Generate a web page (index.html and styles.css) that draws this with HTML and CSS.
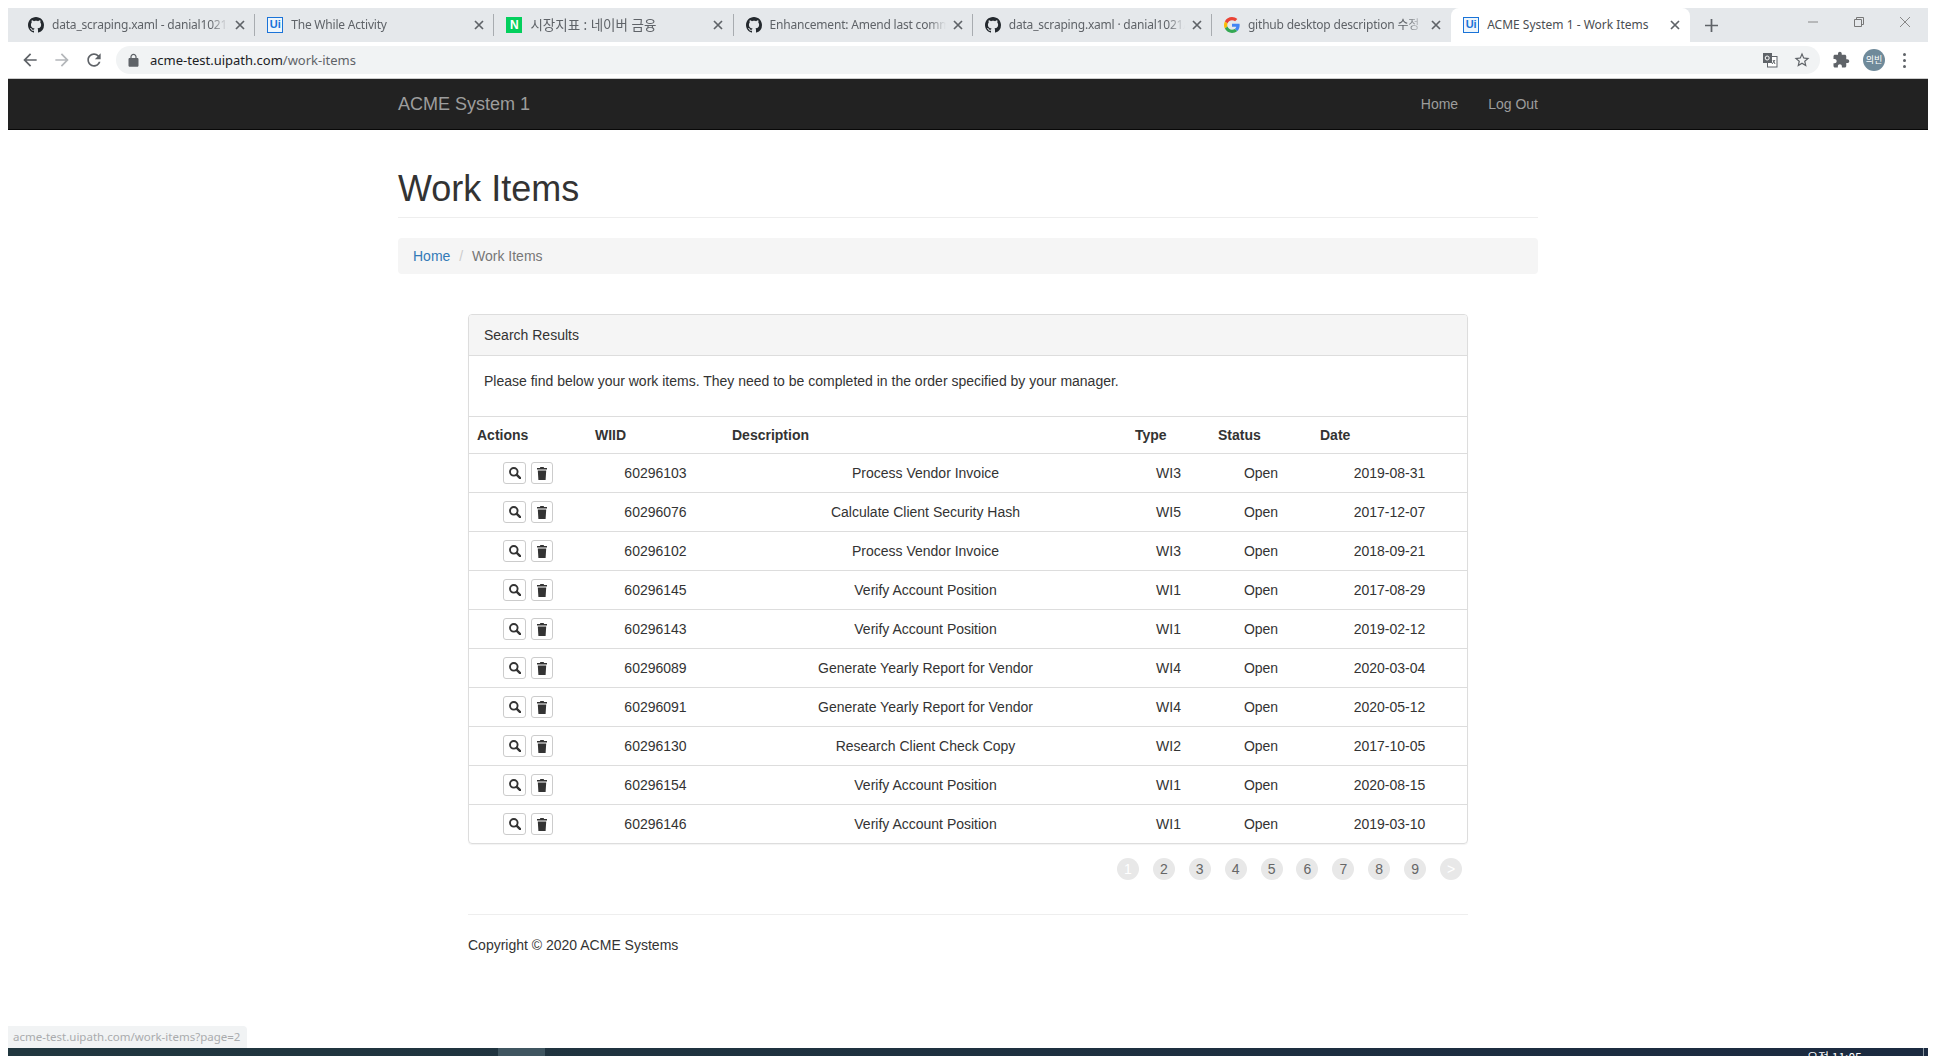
FILE: index.html
```html
<!DOCTYPE html>
<html>
  <head>
    <title>ACME System 1 - Work Items</title>
    <link rel="stylesheet" href="styles.css">
  </head>
  <body>
    <svg class="sprites" width="0" height="0">
      <symbol id="gh" viewBox="0 0 16 16"><path d="M8 0C3.58 0 0 3.58 0 8c0 3.54 2.29 6.53 5.47 7.59.4.07.55-.17.55-.38 0-.19-.01-.82-.01-1.49-2.01.37-2.53-.49-2.69-.94-.09-.23-.48-.94-.82-1.13-.28-.15-.68-.52-.01-.53.63-.01 1.08.58 1.23.82.72 1.21 1.87.87 2.33.66.07-.52.28-.87.51-1.07-1.78-.2-3.64-.89-3.64-3.95 0-.87.31-1.59.82-2.15-.08-.2-.36-1.02.08-2.12 0 0 .67-.21 2.2.82.64-.18 1.32-.27 2-.27.68 0 1.36.09 2 .27 1.53-1.04 2.2-.82 2.2-.82.44 1.1.16 1.92.08 2.12.51.56.82 1.27.82 2.15 0 3.07-1.87 3.75-3.65 3.95.29.25.54.73.54 1.48 0 1.07-.01 1.93-.01 2.2 0 .21.15.46.55.38A8.013 8.013 0 0016 8c0-4.42-3.58-8-8-8z"/></symbol>
      <symbol id="close" viewBox="0 0 10 10"><path d="M1 1l8 8M9 1l-8 8" stroke="#5f6368" stroke-width="1.700" fill="none"/></symbol>
      <symbol id="search" viewBox="0 0 12 12"><circle cx="4.800" cy="4.800" r="3.800" fill="none" stroke="#333" stroke-width="1.900"/><path d="M7.800 7.800l3.300 3.300" stroke="#333" stroke-width="2.400" stroke-linecap="round"/></symbol>
      <symbol id="trash" viewBox="0 0 10 13"><path d="M3.400 0h3.200l.5 1H10v1.500H0V1h2.900zM.8 3.400h8.400l-.6 9.600H1.400z" fill="#333"/></symbol>
    </svg>

    <div class="tabstrip">
      <div class="tab">
        <svg class="favicon"><use href="#gh"/></svg>
        <span class="tab-title">data_scraping.xaml - danial1021/UiPath</span>
        <svg class="tab-close"><use href="#close"/></svg>
      </div>
      <div class="tab">
        <span class="ui-icon">Ui</span>
        <span class="tab-title">The While Activity</span>
        <svg class="tab-close"><use href="#close"/></svg>
      </div>
      <div class="tab">
        <span class="naver-icon">N</span>
        <span class="tab-title tab-title-ko">시장지표 : 네이버 금융</span>
        <svg class="tab-close"><use href="#close"/></svg>
      </div>
      <div class="tab">
        <svg class="favicon"><use href="#gh"/></svg>
        <span class="tab-title">Enhancement: Amend last commit</span>
        <svg class="tab-close"><use href="#close"/></svg>
      </div>
      <div class="tab">
        <svg class="favicon"><use href="#gh"/></svg>
        <span class="tab-title">data_scraping.xaml · danial1021/UiPath</span>
        <svg class="tab-close"><use href="#close"/></svg>
      </div>
      <div class="tab tab-before-active">
        <svg class="favicon" viewBox="0 0 48 48">
          <path fill="#EA4335" d="M24 9.500c3.540 0 6.710 1.220 9.210 3.600l6.850-6.850C35.900 2.380 30.470 0 24 0 14.620 0 6.510 5.380 2.560 13.220l7.980 6.190C12.430 13.720 17.740 9.500 24 9.500z"/>
          <path fill="#4285F4" d="M46.980 24.550c0-1.570-.15-3.090-.38-4.550H24v9.020h12.940c-.58 2.960-2.260 5.480-4.780 7.180l7.730 6c4.510-4.180 7.090-10.360 7.090-17.650z"/>
          <path fill="#FBBC05" d="M10.530 28.590c-.48-1.450-.76-2.990-.76-4.590s.27-3.140.76-4.590l-7.980-6.190C.92 16.460 0 20.120 0 24c0 3.880.92 7.540 2.560 10.780l7.970-6.190z"/>
          <path fill="#34A853" d="M24 48c6.480 0 11.930-2.130 15.890-5.810l-7.730-6c-2.150 1.450-4.920 2.300-8.160 2.300-6.260 0-11.570-4.220-13.470-9.910l-7.980 6.190C6.510 42.620 14.620 48 24 48z"/>
        </svg>
        <span class="tab-title">github desktop description 수정</span>
        <svg class="tab-close"><use href="#close"/></svg>
      </div>
      <div class="tab tab-active">
        <span class="ui-icon">Ui</span>
        <span class="tab-title tab-title-full">ACME System 1 - Work Items</span>
        <svg class="tab-close"><use href="#close"/></svg>
      </div>
      <svg class="new-tab" viewBox="0 0 12 12"><path d="M6 0v12M0 6h12" stroke="#5f6368" stroke-width="1.600"/></svg>
      <div class="window-controls">
        <svg viewBox="0 0 12 12"><path d="M1 6h10" stroke="#888" stroke-width="1"/></svg>
        <svg viewBox="0 0 12 12"><path d="M1.500 3.500h7v7h-7zM3.500 3.500v-2h7v7h-2" stroke="#777" stroke-width="1" fill="none"/></svg>
        <svg viewBox="0 0 12 12"><path d="M1 1l10 10M11 1L1 11" stroke="#888" stroke-width="1"/></svg>
      </div>
    </div>

    <div class="toolbar">
      <svg class="tool-icon" viewBox="0 0 24 24"><path fill="#5f6368" d="M20 11H7.830l5.590-5.590L12 4l-8 8 8 8 1.410-1.410L7.830 13H20v-2z"/></svg>
      <svg class="tool-icon" viewBox="0 0 24 24"><path fill="#b4b7ba" d="M4 11h12.170l-5.590-5.590L12 4l8 8-8 8-1.410-1.410L16.170 13H4v-2z"/></svg>
      <svg class="tool-icon" viewBox="0 0 24 24"><path fill="#5f6368" d="M17.650 6.350C16.200 4.900 14.210 4 12 4c-4.420 0-7.990 3.580-7.990 8s3.570 8 7.990 8c3.730 0 6.840-2.550 7.730-6h-2.080c-.82 2.330-3.040 4-5.650 4-3.310 0-6-2.690-6-6s2.690-6 6-6c1.660 0 3.140.69 4.220 1.780L13 11h7V4l-2.350 2.350z"/></svg>
      <div class="omnibox">
        <svg class="lock" viewBox="0 0 24 24"><path fill="#5f6368" d="M18 8h-1V6c0-2.760-2.240-5-5-5S7 3.240 7 6v2H6c-1.100 0-2 .9-2 2v10c0 1.100.9 2 2 2h12c1.100 0 2-.9 2-2V10c0-1.100-.9-2-2-2zM9 6c0-1.660 1.340-3 3-3s3 1.340 3 3v2H9V6z"/></svg>
        <span class="url">acme-test.uipath.com<span class="url-path">/work-items</span></span>
        <svg class="translate" viewBox="0 0 16 16">
          <rect x="5.500" y="4.500" width="9.500" height="10.500" fill="#fff" stroke="#5f6368"/>
          <rect x="1" y="1" width="9" height="10" fill="#5f6368"/>
          <circle cx="5.200" cy="6" r="2" fill="none" stroke="#fff"/>
          <path d="M11 8l2 4M13 8l-3 4" stroke="#5f6368"/>
        </svg>
        <svg class="star" viewBox="0 0 24 24"><path fill="#5f6368" d="M22 9.240l-7.190-.62L12 2 9.190 8.630 2 9.240l5.460 4.730L5.820 21 12 17.270 18.180 21l-1.630-7.030L22 9.240zM12 15.400l-3.760 2.270 1-4.280-3.320-2.880 4.380-.38L12 6.100l1.710 4.040 4.380.38-3.320 2.880 1 4.280L12 15.400z"/></svg>
      </div>
      <svg class="puzzle" viewBox="0 0 24 24"><path fill="#5f6368" d="M20.500 11H19V7c0-1.100-.9-2-2-2h-4V3.500C13 2.120 11.880 1 10.500 1S8 2.120 8 3.500V5H4c-1.100 0-1.990.9-1.990 2v3.800H3.500c1.490 0 2.700 1.210 2.700 2.700s-1.210 2.700-2.700 2.700H2V20c0 1.100.9 2 2 2h3.800v-1.500c0-1.490 1.210-2.700 2.700-2.700 1.490 0 2.700 1.210 2.700 2.700V22H17c1.100 0 2-.9 2-2v-4h1.500c1.380 0 2.500-1.120 2.500-2.500S21.880 11 20.500 11z"/></svg>
      <span class="avatar">의빈</span>
      <span class="dots"><i></i><i></i><i></i></span>
    </div>

    <nav class="navbar">
      <div class="container navbar-inner">
        <a class="brand">ACME System 1</a>
        <div class="nav-links">
          <a>Home</a>
          <a>Log Out</a>
        </div>
      </div>
    </nav>

    <main class="page">
      <div class="container">
        <div class="page-header">
          <h1>Work Items</h1>
        </div>
        <div class="breadcrumb">
          <a>Home</a>
          <span class="crumb-sep">/</span>
          <span class="crumb-active">Work Items</span>
        </div>

        <div class="content">
          <div class="panel">
            <div class="panel-heading">Search Results</div>
            <div class="panel-body">
              <p>Please find below your work items. They need to be completed in the order specified by your manager.</p>
            </div>
            <table class="items">
              <colgroup>
                <col class="col-actions"><col class="col-wiid"><col class="col-desc"><col class="col-type"><col class="col-status"><col class="col-date">
              </colgroup>
              <thead>
                <tr><th>Actions</th><th>WIID</th><th>Description</th><th>Type</th><th>Status</th><th>Date</th></tr>
              </thead>
              <tbody>
                <tr>
                  <td><div class="actions"><a class="btn btn-search"><svg><use href="#search"/></svg></a><a class="btn"><svg class="trash"><use href="#trash"/></svg></a></div></td>
                  <td>60296103</td><td>Process Vendor Invoice</td><td>WI3</td><td>Open</td><td>2019-08-31</td>
                </tr>
                <tr>
                  <td><div class="actions"><a class="btn btn-search"><svg><use href="#search"/></svg></a><a class="btn"><svg class="trash"><use href="#trash"/></svg></a></div></td>
                  <td>60296076</td><td>Calculate Client Security Hash</td><td>WI5</td><td>Open</td><td>2017-12-07</td>
                </tr>
                <tr>
                  <td><div class="actions"><a class="btn btn-search"><svg><use href="#search"/></svg></a><a class="btn"><svg class="trash"><use href="#trash"/></svg></a></div></td>
                  <td>60296102</td><td>Process Vendor Invoice</td><td>WI3</td><td>Open</td><td>2018-09-21</td>
                </tr>
                <tr>
                  <td><div class="actions"><a class="btn btn-search"><svg><use href="#search"/></svg></a><a class="btn"><svg class="trash"><use href="#trash"/></svg></a></div></td>
                  <td>60296145</td><td>Verify Account Position</td><td>WI1</td><td>Open</td><td>2017-08-29</td>
                </tr>
                <tr>
                  <td><div class="actions"><a class="btn btn-search"><svg><use href="#search"/></svg></a><a class="btn"><svg class="trash"><use href="#trash"/></svg></a></div></td>
                  <td>60296143</td><td>Verify Account Position</td><td>WI1</td><td>Open</td><td>2019-02-12</td>
                </tr>
                <tr>
                  <td><div class="actions"><a class="btn btn-search"><svg><use href="#search"/></svg></a><a class="btn"><svg class="trash"><use href="#trash"/></svg></a></div></td>
                  <td>60296089</td><td>Generate Yearly Report for Vendor</td><td>WI4</td><td>Open</td><td>2020-03-04</td>
                </tr>
                <tr>
                  <td><div class="actions"><a class="btn btn-search"><svg><use href="#search"/></svg></a><a class="btn"><svg class="trash"><use href="#trash"/></svg></a></div></td>
                  <td>60296091</td><td>Generate Yearly Report for Vendor</td><td>WI4</td><td>Open</td><td>2020-05-12</td>
                </tr>
                <tr>
                  <td><div class="actions"><a class="btn btn-search"><svg><use href="#search"/></svg></a><a class="btn"><svg class="trash"><use href="#trash"/></svg></a></div></td>
                  <td>60296130</td><td>Research Client Check Copy</td><td>WI2</td><td>Open</td><td>2017-10-05</td>
                </tr>
                <tr>
                  <td><div class="actions"><a class="btn btn-search"><svg><use href="#search"/></svg></a><a class="btn"><svg class="trash"><use href="#trash"/></svg></a></div></td>
                  <td>60296154</td><td>Verify Account Position</td><td>WI1</td><td>Open</td><td>2020-08-15</td>
                </tr>
                <tr>
                  <td><div class="actions"><a class="btn btn-search"><svg><use href="#search"/></svg></a><a class="btn"><svg class="trash"><use href="#trash"/></svg></a></div></td>
                  <td>60296146</td><td>Verify Account Position</td><td>WI1</td><td>Open</td><td>2019-03-10</td>
                </tr>
              </tbody>
            </table>
          </div>

          <div class="pagination">
            <span class="page-dot disabled">1</span>
            <a class="page-dot">2</a>
            <a class="page-dot">3</a>
            <a class="page-dot">4</a>
            <a class="page-dot">5</a>
            <a class="page-dot">6</a>
            <a class="page-dot">7</a>
            <a class="page-dot">8</a>
            <a class="page-dot">9</a>
            <span class="page-dot disabled">&gt;</span>
          </div>

          <footer class="footer">
            <p>Copyright © 2020 ACME Systems</p>
          </footer>
        </div>
      </div>
      <div class="status-bubble">acme-test.uipath.com/work-items?page=2</div>
    </main>

    <div class="taskbar">
      <span class="task-active"></span>
      <span class="clock">오전 11:05</span>
      <span class="show-desktop"></span>
    </div>
  </body>
</html>
```

FILE: styles.css
```css
body {
  font-family: "Liberation Sans", Arial, sans-serif;
  font-size: 14px;
  line-height: 20px;
  color: #333;
  margin: 0;
  padding: 8px 8px 0;
  height: 1056px;
  box-sizing: border-box;
  background-color: #fff;
  display: flex;
  flex-direction: column;
  overflow: hidden;
}

.sprites {
  position: absolute;
}

/* browser chrome */
.tabstrip {
  display: flex;
  align-items: stretch;
  height: 34px;
  padding-left: 8px;
  background-color: #e5e8eb;
  flex: none;
}

.tab {
  width: 239.2px;
  box-sizing: border-box;
  display: flex;
  align-items: center;
  padding-left: 12px;
  position: relative;
  font-family: "Noto Sans", "Noto Sans CJK KR", sans-serif;
  font-size: 12px;
  color: #5f6368;
}

.tab::after {
  content: "";
  position: absolute;
  right: 0;
  top: 6px;
  bottom: 6px;
  width: 1px;
  background-color: #a8acb0;
}

.tab-before-active::after,
.tab-active::after {
  display: none;
}

.tab-active {
  background-color: #fff;
  border-radius: 8px 8px 0 0;
  color: #4a4e52;
}

.favicon {
  width: 16px;
  height: 16px;
  fill: #24292e;
  flex: none;
}

.ui-icon {
  width: 16px;
  height: 16px;
  box-sizing: border-box;
  border: 1.5px solid #1a73d8;
  flex: none;
  font-family: "Liberation Sans", sans-serif;
  font-size: 11px;
  font-weight: bold;
  line-height: 13px;
  text-align: center;
  color: #1a73d8;
  background-color: #eef6fc;
}

.naver-icon {
  width: 16px;
  height: 16px;
  background-color: #03cf5d;
  flex: none;
  font-family: "Liberation Sans", sans-serif;
  font-size: 12px;
  font-weight: bold;
  line-height: 16px;
  text-align: center;
  color: #fff;
}

.tab-title {
  margin-left: 8px;
  width: 176px;
  white-space: nowrap;
  overflow: hidden;
  letter-spacing: -.2px;
  -webkit-mask-image: linear-gradient(to right, #000 90%, transparent);
  mask-image: linear-gradient(to right, #000 90%, transparent);
}

.tab-title-ko {
  font-size: 13.5px;
  letter-spacing: 0;
}

.tab-title-full {
  letter-spacing: 0;
  -webkit-mask-image: none;
  mask-image: none;
}

.tab-close {
  position: absolute;
  left: 219px;
  top: 12px;
  width: 10px;
  height: 10px;
}

.new-tab {
  width: 13px;
  height: 13px;
  margin: 11px 0 0 15px;
  flex: none;
}

.window-controls {
  margin-left: auto;
  display: flex;
  gap: 34px;
  padding: 8px 17px 0 0;
}

.window-controls svg {
  width: 12px;
  height: 12px;
}

.toolbar {
  height: 37px;
  flex: none;
  display: flex;
  align-items: center;
  padding-left: 12px;
  border-bottom: 1px solid #ccc;
  box-sizing: border-box;
  background-color: #fff;
}

.tool-icon {
  width: 20px;
  height: 20px;
  margin-right: 12px;
  flex: none;
}

.omnibox {
  width: 1704px;
  height: 28px;
  border-radius: 14px;
  background-color: #f1f3f4;
  display: flex;
  align-items: center;
  padding: 0 9px 0 10px;
  box-sizing: border-box;
  flex: none;
}

.lock {
  width: 15px;
  height: 15px;
  flex: none;
}

.url {
  margin-left: 9px;
  font-family: "Noto Sans", sans-serif;
  font-size: 13px;
  color: #202124;
}

.url-path {
  color: #5f6368;
}

.translate {
  width: 16px;
  height: 16px;
  margin-left: auto;
  flex: none;
}

.star {
  width: 18px;
  height: 18px;
  margin-left: 15px;
  flex: none;
}

.puzzle {
  width: 18px;
  height: 18px;
  margin-left: 12px;
  flex: none;
}

.avatar {
  width: 22px;
  height: 22px;
  margin-left: 13px;
  border-radius: 50%;
  background-color: #6f8a9a;
  color: #fff;
  font-family: "Noto Sans CJK KR", sans-serif;
  font-size: 9px;
  line-height: 22px;
  text-align: center;
  flex: none;
}

.dots {
  margin-left: 18px;
  display: flex;
  flex-direction: column;
  gap: 3px;
}

.dots i {
  width: 3px;
  height: 3px;
  border-radius: 50%;
  background-color: #5f6368;
}

/* site nav */
.container {
  width: 1140px;
  margin: 0 auto;
}

.navbar {
  height: 51px;
  flex: none;
  box-sizing: border-box;
  background-color: #222;
  border-bottom: 1px solid #080808;
}

.navbar-inner {
  display: flex;
  justify-content: space-between;
  align-items: center;
  height: 50px;
}

.brand {
  font-size: 18px;
  color: #9d9d9d;
}

.nav-links {
  display: flex;
  gap: 30px;
  color: #9d9d9d;
}

/* page */
.page {
  flex: 1;
  position: relative;
  min-height: 0;
}

.page-header {
  margin-top: 20px;
  padding-bottom: 8px;
  border-bottom: 1px solid #eee;
  margin-bottom: 20px;
}

h1 {
  font-size: 36px;
  font-weight: 500;
  line-height: 40px;
  margin: 0;
  padding-top: 19px;
}

.breadcrumb {
  padding: 8px 15px;
  background-color: #f5f5f5;
  border-radius: 4px;
  margin-bottom: 40px;
}

.breadcrumb a {
  color: #337ab7;
}

.crumb-sep {
  color: #ccc;
  padding: 0 5px;
}

.crumb-active {
  color: #777;
}

.content {
  width: 1000px;
  margin: 0 auto;
}

.panel {
  border: 1px solid #ddd;
  border-radius: 4px;
  box-shadow: 0 1px 1px rgba(0, 0, 0, .05);
}

.panel-heading {
  padding: 10px 15px;
  background-color: #f5f5f5;
  border-bottom: 1px solid #ddd;
  border-radius: 3px 3px 0 0;
}

.panel-body {
  padding: 10px 15px 15px;
}

.panel-body p {
  margin: 0 0 10px;
  padding-top: 5px;
}

.items {
  width: 998px;
  table-layout: fixed;
  border-collapse: separate;
  border-spacing: 0;
}

.col-actions { width: 118px; }
.col-wiid { width: 137px; }
.col-desc { width: 403px; }
.col-type { width: 83px; }
.col-status { width: 102px; }
.col-date { width: 155px; }

.items th {
  text-align: left;
  padding: 8px;
  border-top: 1px solid #ddd;
}

.items td {
  text-align: center;
  padding: 8px;
  border-top: 1px solid #ddd;
}

.actions {
  display: flex;
  justify-content: center;
  gap: 5px;
}

.btn {
  width: 22px;
  height: 22px;
  box-sizing: border-box;
  border: 1px solid #ccc;
  border-radius: 3px;
  background-color: #fff;
  display: flex;
  align-items: center;
  justify-content: center;
}

.btn-search {
  width: 23px;
}

.btn svg {
  width: 12px;
  height: 12px;
}

.btn svg.trash {
  width: 10px;
  height: 13px;
}

.pagination {
  display: flex;
  justify-content: flex-end;
  gap: 13.9px;
  margin-top: 14px;
  padding-right: 6px;
}

.page-dot {
  width: 22px;
  height: 22px;
  border-radius: 50%;
  background-color: #e8e8e8;
  color: #666;
  line-height: 22px;
  text-align: center;
}

.page-dot.disabled {
  color: #fff;
}

.footer {
  margin-top: 34px;
  border-top: 1px solid #eee;
}

.footer p {
  margin: 20px 0 0;
}

.status-bubble {
  position: absolute;
  left: 0;
  bottom: 0;
  height: 22px;
  padding: 0 7px 0 5px;
  border-radius: 0 4px 0 0;
  background-color: #f1f3f4;
  font-family: "Noto Sans", sans-serif;
  font-size: 11.5px;
  line-height: 22px;
  color: #a9abad;
}

/* windows taskbar, only the top of it is in the shot */
.taskbar {
  height: 8px;
  flex: none;
  position: relative;
  overflow: hidden;
  background: linear-gradient(to right, #21373f, #1b2a40);
}

.task-active {
  position: absolute;
  left: 490px;
  top: 0;
  width: 47px;
  height: 8px;
  background-color: #3f5560;
}

.clock {
  position: absolute;
  left: 1799px;
  top: 1px;
  font-family: "Noto Sans CJK KR", sans-serif;
  font-size: 12px;
  line-height: 16px;
  color: #fff;
}

.show-desktop {
  position: absolute;
  right: 4px;
  top: 0;
  width: 1px;
  height: 8px;
  background-color: #8a97a0;
}
```
